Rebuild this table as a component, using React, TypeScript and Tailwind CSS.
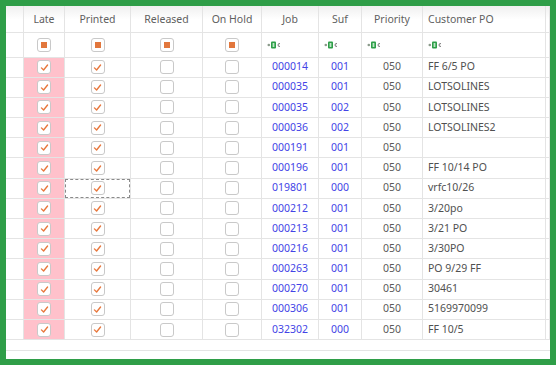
import React from 'react';

const rows: [string, string, string, string][] = [
  ['000014', '001', '050', 'FF 6/5 PO'],
  ['000035', '001', '050', 'LOTSOLINES'],
  ['000035', '002', '050', 'LOTSOLINES'],
  ['000036', '002', '050', 'LOTSOLINES2'],
  ['000191', '001', '050', ''],
  ['000196', '001', '050', 'FF 10/14 PO'],
  ['019801', '000', '050', 'vrfc10/26'],
  ['000212', '001', '050', '3/20po'],
  ['000213', '001', '050', '3/21 PO'],
  ['000216', '001', '050', '3/30PO'],
  ['000263', '001', '050', 'PO 9/29 FF'],
  ['000270', '001', '050', '30461'],
  ['000306', '001', '050', '5169970099'],
  ['032302', '000', '050', 'FF 10/5'],
];

const cols = 'grid grid-cols-[18px_41px_66px_72px_59px_57px_43px_61px_123px_4px]';

function Box({ state }: { state: 'checked' | 'empty' | 'mixed' }) {
  return (
    <div className="w-[14px] h-[14px] border border-[#c9c9c9] rounded-[3px] bg-white flex items-center justify-center">
      {state === 'checked' && (
        <svg viewBox="0 0 10 10" className="w-[9px] h-[9px]">
          <path d="M1.6 5.4 L4 7.8 L8.4 2.2" fill="none" stroke="#e8773c" strokeWidth="1.5" strokeLinecap="round" strokeLinejoin="round" />
        </svg>
      )}
      {state === 'mixed' && <div className="w-[6px] h-[6px] bg-[#e2773d]" />}
    </div>
  );
}

function FilterIcon() {
  return (
    <svg viewBox="0 0 14 8" className="w-[14px] h-[8px]">
      <circle cx="1.8" cy="4" r="1.3" fill="#8a9a8a" />
      <rect x="4" y="0.5" width="5" height="7" rx="1" fill="#2e9e48" />
      <rect x="5.6" y="2" width="1.8" height="4" fill="#bfe6c8" />
      <path d="M13 2.6 Q11 2.2 11 4 Q11 5.8 13 5.4" fill="none" stroke="#777" strokeWidth="1" />
    </svg>
  );
}

const cell = 'border-r border-b border-[#e4e4e4] flex items-center';

export default function App() {
  return (
    <div className="w-[556px] h-[365px] bg-[#2f9e48] p-[6px] font-['Noto_Sans','Open_Sans',sans-serif] text-[10.5px]">
      <div className="w-full h-full bg-white flex flex-col">
        {/* header */}
        <div className={`${cols} h-[27px] bg-gradient-to-b from-[#f0f0f0] via-white to-white text-[#606060]`}>
          <div className={cell} />
          {['Late', 'Printed', 'Released', 'On Hold', 'Job', 'Suf', 'Priority'].map(h => (
            <div key={h} className={`${cell} justify-center pt-[2px]`}>{h}</div>
          ))}
          <div className={`${cell} pl-[5px] pt-[2px]`}>Customer PO</div>
          <div className={cell} />
        </div>

        {/* filter row */}
        <div className={`${cols} h-[24.5px]`}>
          <div className={cell} />
          {[0, 1, 2, 3].map(i => (
            <div key={i} className={`${cell} justify-center`}>
              <Box state="mixed" />
            </div>
          ))}
          {[0, 1, 2].map(i => (
            <div key={i} className={`${cell} pl-[5px]`}>
              <FilterIcon />
            </div>
          ))}
          <div className={`${cell} pl-[5px]`}>
            <FilterIcon />
          </div>
          <div className={cell} />
        </div>

        {/* rows */}
        {rows.map(([job, suf, pri, po], i) => (
          <div key={i} className={`${cols} h-[20.2px]`}>
            <div className={cell} />
            <div className={`${cell} justify-center bg-[#ffc1cb]`}>
              <Box state="checked" />
            </div>
            <div className={`${cell} justify-center relative`}>
              {i === 6 && <div className="absolute inset-0 border border-dashed border-[#8a8a8a]" />}
              <Box state="checked" />
            </div>
            <div className={`${cell} justify-center`}>
              <Box state="empty" />
            </div>
            <div className={`${cell} justify-center`}>
              <Box state="empty" />
            </div>
            <div className={`${cell} justify-center text-[#4343e6]`}>{job}</div>
            <div className={`${cell} justify-center text-[#4343e6]`}>{suf}</div>
            <div className={`${cell} justify-center text-[#5a5a5a]`}>{pri}</div>
            <div className={`${cell} pl-[5px] text-[#505050]`}>{po}</div>
            <div className={cell} />
          </div>
        ))}

        <div className="h-[10.5px] border-b border-[#e4e4e4]" />
      </div>
    </div>
  );
}
